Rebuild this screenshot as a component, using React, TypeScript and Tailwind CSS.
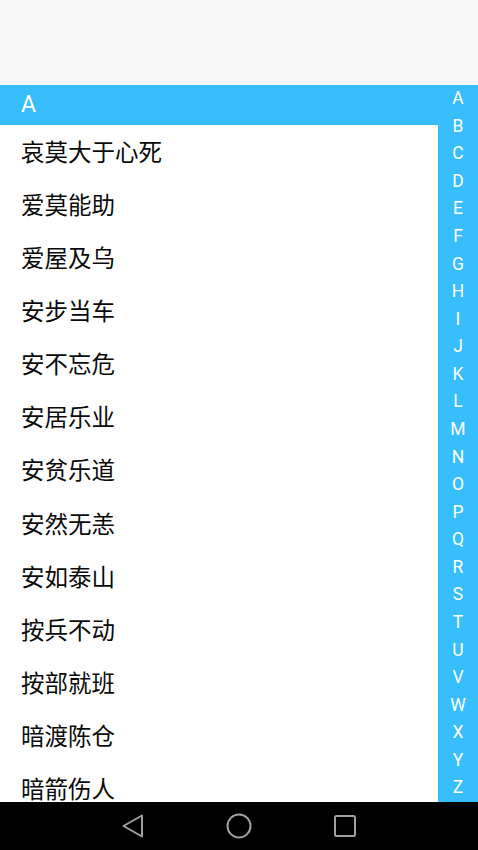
import React from "react";

const idioms = [
  "哀莫大于心死",
  "爱莫能助",
  "爱屋及乌",
  "安步当车",
  "安不忘危",
  "安居乐业",
  "安贫乐道",
  "安然无恙",
  "安如泰山",
  "按兵不动",
  "按部就班",
  "暗渡陈仓",
  "暗箭伤人",
];

const letters = "ABCDEFGHIJKLMNOPQRSTUVWXYZ".split("");

export default function App() {
  return (
    <div
      className="w-[478px] h-[850px] flex flex-col bg-white overflow-hidden"
      style={{ fontFamily: '"Noto Sans CJK SC", Roboto, sans-serif' }}
    >
      {/* Top bar */}
      <div className="h-[85px] shrink-0 bg-[#f8f8f8]"></div>

      <div className="flex flex-1 min-h-0">
        <div className="flex-1 flex flex-col min-w-0">
          <div className="h-[40px] shrink-0 bg-[#38bdfd] flex items-center pl-[21px] text-white text-[23px] font-['Roboto']">
            A
          </div>
          <div className="flex-1 overflow-hidden">
            {idioms.map((name) => (
              <div
                key={name}
                className="h-[53.1px] flex items-center pl-[21px] text-[23.5px] text-[#0a0a0a]"
              >
                {name}
              </div>
            ))}
          </div>
        </div>

        {/* Index sidebar */}
        <div className="w-[40px] shrink-0 bg-[#38bdfd] flex flex-col font-['Roboto']">
          {letters.map((l) => (
            <div
              key={l}
              className="flex-1 flex items-center justify-center text-white text-[17.5px] leading-none"
            >
              {l}
            </div>
          ))}
        </div>
      </div>

      {/* Navigation bar */}
      <div className="h-[48px] shrink-0 bg-black flex items-center justify-center gap-[81px] text-[#a0a0a0]">
        <svg width="24" height="24" viewBox="0 0 24 24">
          <path d="M21 1.5 L2.5 12 L21 22.5 Z" fill="none" stroke="currentColor" strokeWidth="2" strokeLinejoin="round" />
        </svg>
        <svg width="26" height="26" viewBox="0 0 26 26">
          <circle cx="13" cy="13" r="11.5" fill="none" stroke="currentColor" strokeWidth="2" />
        </svg>
        <svg width="24" height="24" viewBox="0 0 24 24">
          <rect x="2" y="2" width="20" height="20" rx="1.5" fill="none" stroke="currentColor" strokeWidth="2" />
        </svg>
      </div>
    </div>
  );
}
